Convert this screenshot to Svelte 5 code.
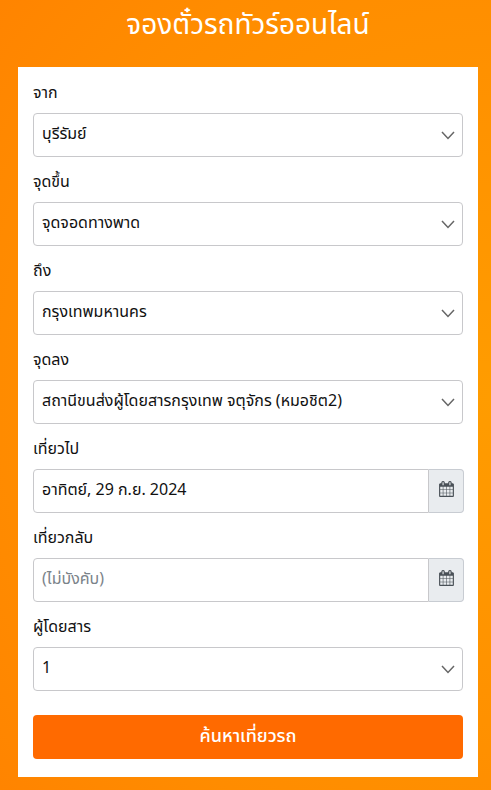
<script lang="ts">
  let from = $state('บุรีรัมย์');
  let pickup = $state('จุดจอดทางพาด');
  let to = $state('กรุงเทพมหานคร');
  let dropoff = $state('สถานีขนส่งผู้โดยสารกรุงเทพ จตุจักร (หมอชิต2)');
  let departDate = $state('อาทิตย์, 29 ก.ย. 2024');
  let returnDate = $state('');
  let passengers = $state('1');

  function search(e: Event) {
    e.preventDefault();
  }
</script>

{#snippet calendarIcon()}
  <svg viewBox="0 0 1664 1792" width="15" height="16" aria-hidden="true">
    <path
      fill="currentColor"
      d="M128 1664h288v-288h-288v288zm352 0h320v-288h-320v288zm-352-352h288v-320h-288v320zm352 0h320v-320h-320v320zm-352-384h288v-288h-288v288zm736 736h320v-288h-320v288zm-384-736h320v-288h-320v288zm768 736h288v-288h-288v288zm-384-352h320v-320h-320v320zm-352-864v-288q0-13-9.500-22.500t-22.500-9.500h-64q-13 0-22.500 9.500t-9.500 22.500v288q0 13 9.500 22.500t22.500 9.500h64q13 0 22.500-9.500t9.500-22.500zm736 864h288v-320h-288v320zm-384-384h320v-288h-320v288zm384 0h288v-288h-288v288zm32-480v-288q0-13-9.500-22.500t-22.500-9.500h-64q-13 0-22.500 9.500t-9.500 22.500v288q0 13 9.500 22.500t22.500 9.500h64q13 0 22.500-9.500t9.500-22.500zm384-64v1280q0 52-38 90t-90 38h-1408q-52 0-90-38t-38-90v-1280q0-52 38-90t90-38h128v-96q0-66 47-113t113-47h64q66 0 113 47t47 113v96h384v-96q0-66 47-113t113-47h64q66 0 113 47t47 113v96h128q52 0 90 38t38 90z"
    />
  </svg>
{/snippet}

<main>
  <h1>จองตั๋วรถทัวร์ออนไลน์</h1>

  <form onsubmit={search}>
    <div class="field">
      <label for="from">จาก</label>
      <select id="from" bind:value={from}>
        <option>บุรีรัมย์</option>
      </select>
    </div>

    <div class="field">
      <label for="pickup">จุดขึ้น</label>
      <select id="pickup" bind:value={pickup}>
        <option>จุดจอดทางพาด</option>
      </select>
    </div>

    <div class="field">
      <label for="to">ถึง</label>
      <select id="to" bind:value={to}>
        <option>กรุงเทพมหานคร</option>
      </select>
    </div>

    <div class="field">
      <label for="dropoff">จุดลง</label>
      <select id="dropoff" bind:value={dropoff}>
        <option>สถานีขนส่งผู้โดยสารกรุงเทพ จตุจักร (หมอชิต2)</option>
      </select>
    </div>

    <div class="field">
      <label for="depart">เที่ยวไป</label>
      <div class="date">
        <input id="depart" type="text" bind:value={departDate} />
        <button type="button" aria-label="เที่ยวไป">{@render calendarIcon()}</button>
      </div>
    </div>

    <div class="field">
      <label for="return">เที่ยวกลับ</label>
      <div class="date">
        <input id="return" type="text" placeholder="(ไม่บังคับ)" bind:value={returnDate} />
        <button type="button" aria-label="เที่ยวกลับ">{@render calendarIcon()}</button>
      </div>
    </div>

    <div class="field">
      <label for="passengers">ผู้โดยสาร</label>
      <select id="passengers" bind:value={passengers}>
        <option>1</option>
        <option>2</option>
        <option>3</option>
        <option>4</option>
      </select>
    </div>

    <button class="submit" type="submit">ค้นหาเที่ยวรถ</button>
  </form>
</main>

<style>
  :global(body) {
    margin: 0;
  }

  main {
    box-sizing: border-box;
    min-height: 100vh;
    padding: 6px 13px 13px 18px;
    background: radial-gradient(circle at 100% 50%, #ff9c00, #ff8c00 75%, #ff8400);
    color: #111;
    font-family: 'Noto Sans Thai', 'Noto Sans', 'Open Sans', sans-serif;
    font-size: 16px;
    line-height: 24px;
  }

  h1 {
    margin: 0 0 21px;
    color: #fff;
    font-size: 28px;
    font-weight: 400;
    line-height: 40px;
    text-align: center;
  }

  form {
    display: flex;
    flex-direction: column;
    gap: 13px;
    padding: 14px 15px 18px;
    background: #fff;
  }

  .field {
    display: flex;
    flex-direction: column;
    gap: 8px;
  }

  select,
  input,
  button {
    box-sizing: border-box;
    margin: 0;
    font: inherit;
  }

  select,
  input {
    width: 100%;
    min-width: 0;
    height: 44px;
    padding: 0 8px 2px;
    border: 1px solid #c8c8cb;
    border-radius: 4px;
    background: #fff;
    color: #111;
  }

  select {
    appearance: none;
    padding-right: 32px;
    background: #fff
      url("data:image/svg+xml,%3Csvg xmlns='http://www.w3.org/2000/svg' width='14' height='9'%3E%3Cpath d='M1 1l6 6.500L13 1' fill='none' stroke='%23666' stroke-width='1.500'/%3E%3C/svg%3E")
      no-repeat right 7px center;
  }

  input::placeholder {
    color: #7b838a;
    opacity: 1;
  }

  /* the calendar button overhangs the column by its border */
  .date {
    display: flex;
    margin-right: -1px;
  }

  .date input {
    border-radius: 4px 0 0 4px;
  }

  .date button {
    display: flex;
    flex: none;
    justify-content: center;
    width: 35px;
    padding: 11px 0 0;
    border: 1px solid #c8ccd2;
    border-left: 0;
    border-radius: 0 4px 4px 0;
    background: #e9ecef;
    color: #495057;
  }

  .submit {
    height: 44px;
    margin-top: 11px;
    padding: 0 8px;
    border: 0;
    border-radius: 4px;
    background: #ff6a00;
    color: #fff;
    font-size: 18px;
    font-weight: 500;
  }
</style>
